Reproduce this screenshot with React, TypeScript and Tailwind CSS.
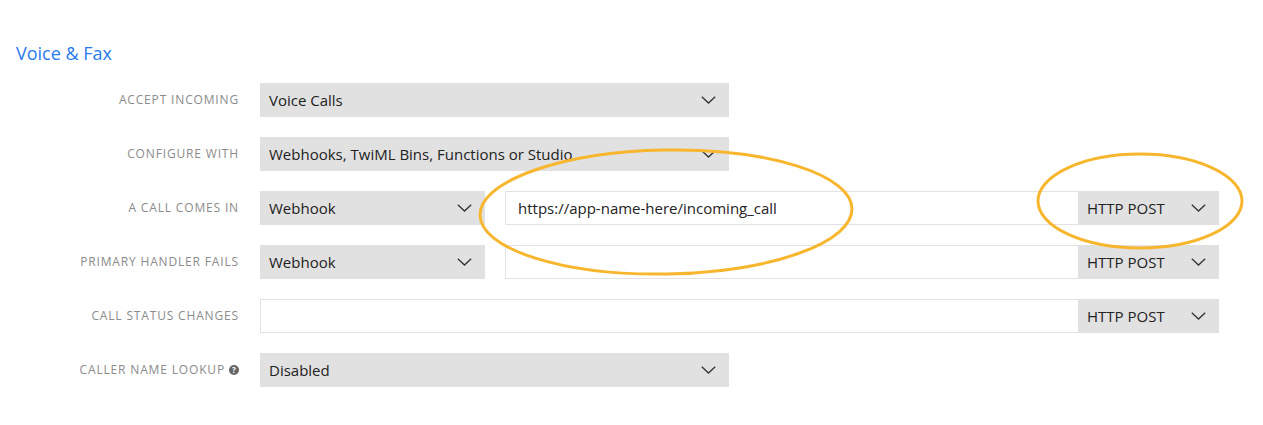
function Chevron() {
  return (
    <svg width="15" height="8" viewBox="0 0 15 8" fill="none" className="text-[#333]">
      <path d="M0.8 0.8 L7.5 7 L14.2 0.8" stroke="currentColor" strokeWidth="1.3" />
    </svg>
  );
}

function Select({ value, width }: { value: string; width: string }) {
  return (
    <div className={`${width} h-[34px] bg-[#e1e1e1] flex items-center justify-between pl-[9px] pr-[13px] text-[15px] text-[#222]`}>
      <span>{value}</span>
      <Chevron />
    </div>
  );
}

function Method() {
  return (
    <div className="w-[141px] h-[34px] bg-[#e1e1e1] flex items-center justify-between pl-[9px] pr-[13px] text-[15px] text-[#222]">
      <span>HTTP POST</span>
      <Chevron />
    </div>
  );
}

function Input({ value, width }: { value?: string; width: string }) {
  return (
    <div className={`${width} h-[34px] border border-[#e2e2e2] border-r-0 flex items-center pl-[12px] text-[15px] text-[#222]`}>
      {value}
    </div>
  );
}

function Row({ label, help, children }: { label: string; help?: boolean; children: React.ReactNode }) {
  return (
    <div className="flex items-center h-[34px]">
      <div className="w-[260px] pr-[21px] flex justify-end items-center gap-[4px] text-[12px] tracking-[0.07em] text-[#8b8b8b] uppercase">
        <span>{label}</span>
        {help && (
          <span className="w-[10px] h-[10px] rounded-full bg-[#666] text-white text-[8px] font-bold flex items-center justify-center leading-none tracking-normal">
            ?
          </span>
        )}
      </div>
      {children}
    </div>
  );
}

export default function App() {
  return (
    <div className="relative w-[1263px] h-[425px] bg-white font-['Open_Sans',sans-serif] overflow-hidden">
      <div className="pt-[40px] pl-[16px] text-[18px] text-[#2b7bf0] leading-[26px]">Voice &amp; Fax</div>
      <div className="mt-[17px] flex flex-col gap-[20px]">
        <Row label="Accept Incoming">
          <Select value="Voice Calls" width="w-[469px]" />
        </Row>
        <Row label="Configure With">
          <Select value="Webhooks, TwiML Bins, Functions or Studio" width="w-[469px]" />
        </Row>
        <Row label="A Call Comes In">
          <Select value="Webhook" width="w-[225px]" />
          <div className="w-[20px]" />
          <Input value="https://app-name-here/incoming_call" width="w-[573px]" />
          <Method />
        </Row>
        <Row label="Primary Handler Fails">
          <Select value="Webhook" width="w-[225px]" />
          <div className="w-[20px]" />
          <Input width="w-[573px]" />
          <Method />
        </Row>
        <Row label="Call Status Changes">
          <Input width="w-[818px]" />
          <Method />
        </Row>
        <Row label="Caller Name Lookup" help>
          <Select value="Disabled" width="w-[469px]" />
        </Row>
      </div>
      <svg className="absolute inset-0 pointer-events-none" width="1263" height="425">
        <ellipse cx="666" cy="212" rx="186" ry="62" fill="none" stroke="#f8b62e" strokeWidth="3" transform="rotate(-1 666 212)" />
        <ellipse cx="1140" cy="201" rx="102" ry="47" fill="none" stroke="#f8b62e" strokeWidth="3" />
      </svg>
    </div>
  );
}
